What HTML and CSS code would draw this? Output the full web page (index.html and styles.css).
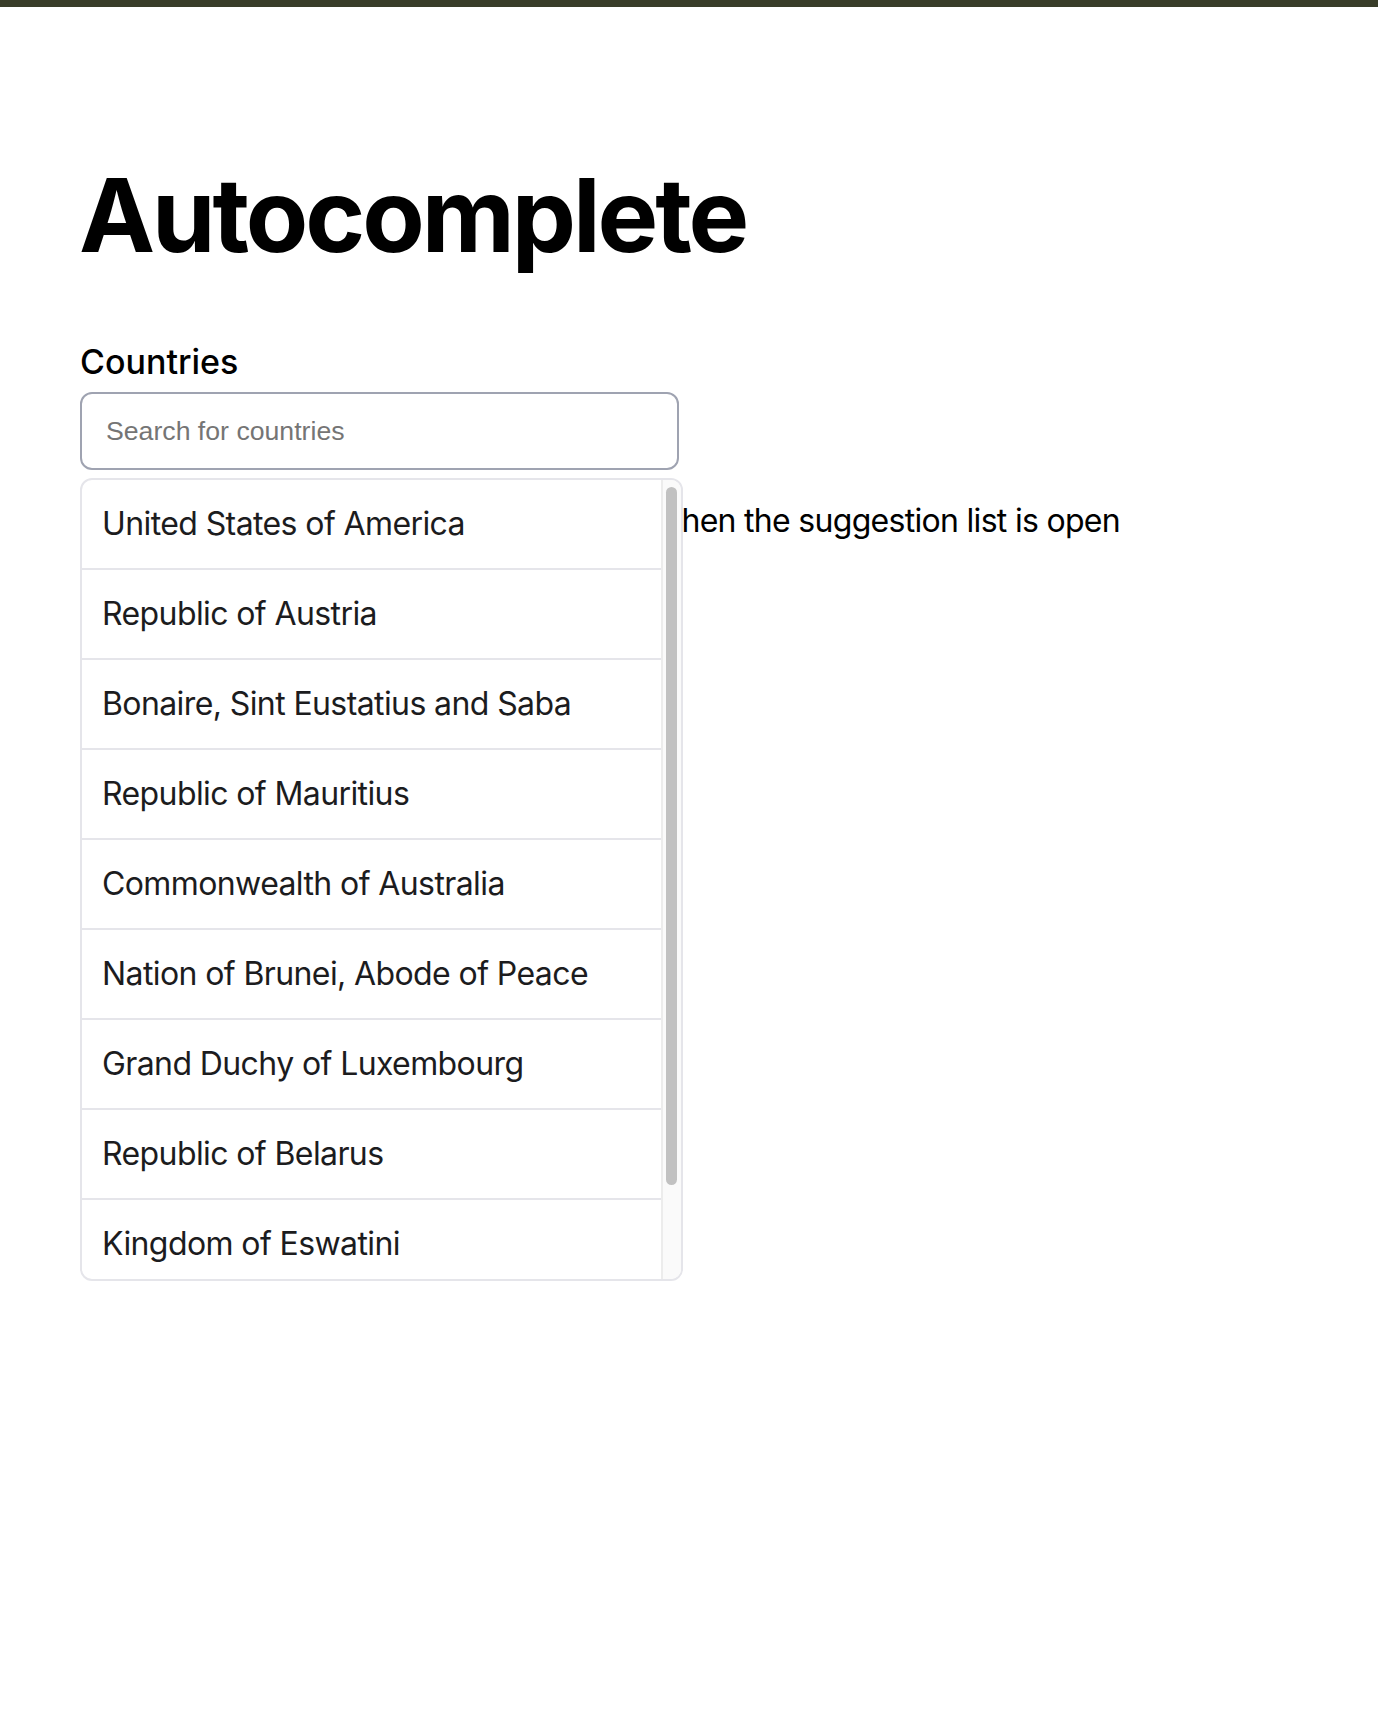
FILE: index.html
```html
<!DOCTYPE html>
<html lang="en">
<head>
<meta charset="utf-8">
<title>Autocomplete</title>
<link rel="stylesheet" href="styles.css">
</head>
<body>
<div class="topbar"></div>
<main class="page">
  <h1 class="title">Autocomplete</h1>
  <label class="field-label" for="country">Countries</label>
  <div class="combo">
    <input id="country" class="combo-input" type="text" placeholder="Search for countries">
    <div class="suggestions">
      <ul class="suggestion-list">
        <li class="suggestion">United States of America</li>
        <li class="suggestion">Republic of Austria</li>
        <li class="suggestion">Bonaire, Sint Eustatius and Saba</li>
        <li class="suggestion">Republic of Mauritius</li>
        <li class="suggestion">Commonwealth of Australia</li>
        <li class="suggestion">Nation of Brunei, Abode of Peace</li>
        <li class="suggestion">Grand Duchy of Luxembourg</li>
        <li class="suggestion">Republic of Belarus</li>
        <li class="suggestion">Kingdom of Eswatini</li>
        <li class="suggestion">Republic of Estonia</li>
      </ul>
      <div class="scrollbar" aria-hidden="true"><div class="scrollbar-thumb"></div></div>
    </div>
  </div>
  <p class="note">This text should be completely covered when the suggestion list is open</p>
</main>
</body>
</html>
```
FILE: styles.css
```css
* { box-sizing: border-box; }

body {
  margin: 0;
  min-height: 1712px;
  background: #ffffff;
  color: #000000;
  font-family: "Inter", "Noto Sans", sans-serif;
}

.topbar {
  height: 7px;
  background: #393d29;
}

.page {
  padding: 0 80px;
}

.title {
  margin: 147px 0 0 -1px;
  font-size: 102px;
  line-height: 1.2;
  font-weight: 700;
  letter-spacing: -0.03em;
}

.field-label {
  display: block;
  margin-top: 62px;
  font-size: 34px;
  line-height: 48px;
  font-weight: 500;
}

.combo {
  position: relative;
  width: 599px;
  margin-top: 6px;
}

.combo-input {
  display: block;
  width: 100%;
  height: 78px;
  margin: 0;
  padding: 0 24px;
  border: 2px solid #9fa3b1;
  border-radius: 12px;
  font-family: "Liberation Sans", Arial, sans-serif;
  font-size: 26.67px;
  color: #000;
  outline: none;
}

.combo-input::placeholder {
  color: #757575;
}

.suggestions {
  position: absolute;
  top: calc(100% + 8px);
  left: 0;
  z-index: 2;
  display: flex;
  width: 603px;
  height: 803px;
  background: #ffffff;
  border: 2px solid #e5e5ea;
  border-radius: 12px;
  overflow: hidden;
}

.suggestion-list {
  flex: 1;
  min-width: 0;
  margin: 0;
  padding: 0;
  list-style: none;
  overflow: hidden;
}

.suggestion {
  padding: 20px;
  font-size: 32px;
  line-height: 48px;
  letter-spacing: -0.6px;
  color: #1c1c1e;
  border-bottom: 2px solid #e5e5ea;
  white-space: nowrap;
}

.scrollbar {
  flex: 0 0 20px;
  background: #fafafa;
  border-left: 2px solid #ececec;
  padding: 7px 4px 0 3px;
}

.scrollbar-thumb {
  height: 698px;
  background: #c1c1c1;
  border-radius: 6px;
}

.note {
  margin: 27px 0 0;
  font-size: 32px;
  line-height: 48px;
  letter-spacing: -0.7px;
}
```
